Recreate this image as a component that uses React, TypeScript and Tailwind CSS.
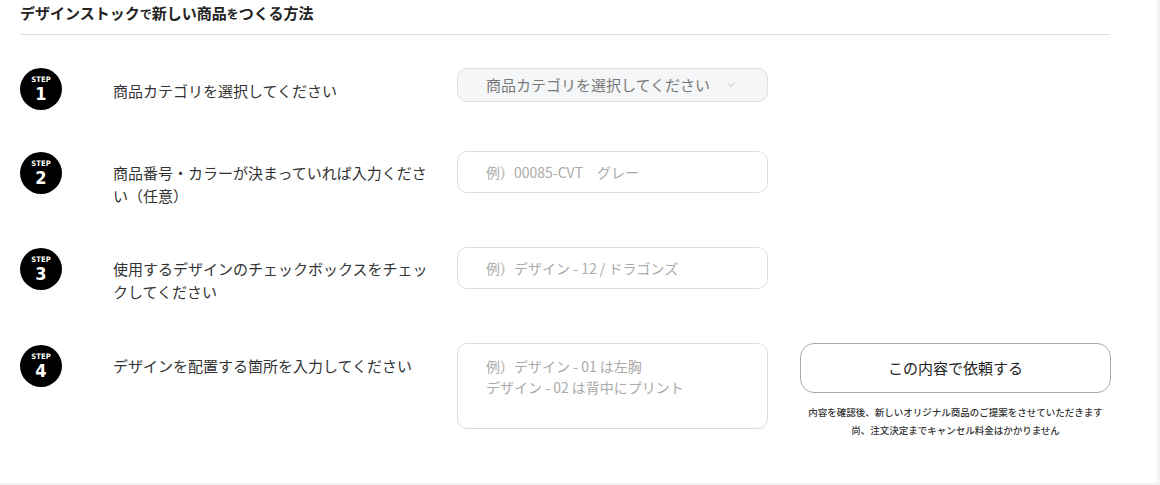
import { ChevronDown } from 'lucide-react';

const JP = { fontFamily: '"Noto Sans CJK JP", "Noto Sans", sans-serif' };

function StepBadge({ n }: { n: number }) {
  return (
    <div className="w-[42px] h-[42px] shrink-0 rounded-full bg-black flex flex-col items-center justify-center text-white leading-none" style={{ fontFamily: '"DejaVu Sans Condensed", Roboto, sans-serif' }}>
      <span className="text-[7.5px] font-bold tracking-[0.02em] mt-[1px]">STEP</span>
      <span className="text-[18px] font-bold mt-[2px]">{n}</span>
    </div>
  );
}

export default function App() {
  return (
    <div className="w-[1160px] h-[485px] bg-[#f3f3f3] overflow-hidden" style={JP}>
      <div className="w-[1157px] h-[483px] bg-white px-[20px]">
        <h2 className="w-[1090px] h-[35px] border-b border-[#dedede] flex items-end pb-[14px] text-[15px] font-bold text-[#222] leading-none">
          <span>デザインストック</span><span className="text-[12px]">で</span><span>新しい商品</span><span className="text-[12px]">を</span><span>つくる方法</span>
        </h2>

        <div className="flex flex-col">
          {/* step 1 */}
          <div className="flex items-start mt-[32px]">
            <div className="mt-[1px]"><StepBadge n={1} /></div>
            <p className="ml-[51px] w-[344px] pt-[12px] pr-[26px] text-[15px] leading-[23px] text-[#333]">商品カテゴリを選択してください</p>
            <div className="mt-[1px] w-[311px] h-[34px] rounded-[10px] bg-[#f5f6f8] border border-[#dcdfe3] flex items-center pl-[28px] pr-[30px] text-[15px] text-[#777]">
              <span className="flex-1">商品カテゴリを選択してください</span>
              <ChevronDown className="w-[12px] h-[12px] text-[#aaa]" strokeWidth={1.5} />
            </div>
          </div>

          {/* step 2 */}
          <div className="flex items-start mt-[41px]">
            <div className="mt-[1px]"><StepBadge n={2} /></div>
            <p className="ml-[51px] w-[344px] pt-[10px] pr-[26px] text-[15px] leading-[23px] text-[#333]">商品番号・カラーが決まっていれば入力ください（任意）</p>
            <div className="w-[311px] h-[42px] rounded-[10px] border border-[#dcdcdc] flex items-center pl-[28px] text-[14px] text-[#aaa]">例）00085-CVT　グレー</div>
          </div>

          {/* step 3 */}
          <div className="flex items-start mt-[40px]">
            <div className="mt-[1px]"><StepBadge n={3} /></div>
            <p className="ml-[51px] w-[344px] pt-[10px] pr-[26px] text-[15px] leading-[23px] text-[#333]">使用するデザインのチェックボックスをチェックしてください</p>
            <div className="w-[311px] h-[42px] rounded-[10px] border border-[#dcdcdc] flex items-center pl-[28px] text-[14px] text-[#aaa]">例）デザイン - 12 / ドラゴンズ</div>
          </div>

          {/* step 4 */}
          <div className="flex items-start mt-[40px]">
            <div className="mt-[2px]"><StepBadge n={4} /></div>
            <p className="ml-[51px] w-[344px] pt-[11px] pr-[26px] text-[15px] leading-[23px] text-[#333]">デザインを配置する箇所を入力してください</p>
            <div className="w-[311px] h-[86px] rounded-[10px] border border-[#dcdcdc] pl-[28px] pt-[12px] text-[14px] leading-[21px] text-[#aaa]">
              <div>例）デザイン - 01 は左胸</div>
              <div>デザイン - 02 は背中にプリント</div>
            </div>
            <div className="ml-[32px] w-[311px] flex flex-col items-center">
              <button className="w-full h-[50px] rounded-[14px] border border-[#aaa] bg-white text-[15px] font-normal text-[#222]">この内容で依頼する</button>
              <p className="mt-[10px] text-center text-[9.5px] leading-[18px] font-medium text-[#333] whitespace-nowrap">
                内容を確認後、新しいオリジナル商品のご提案をさせていただきます<br />尚、注文決定までキャンセル料金はかかりません
              </p>
            </div>
          </div>
        </div>
      </div>
    </div>
  );
}
